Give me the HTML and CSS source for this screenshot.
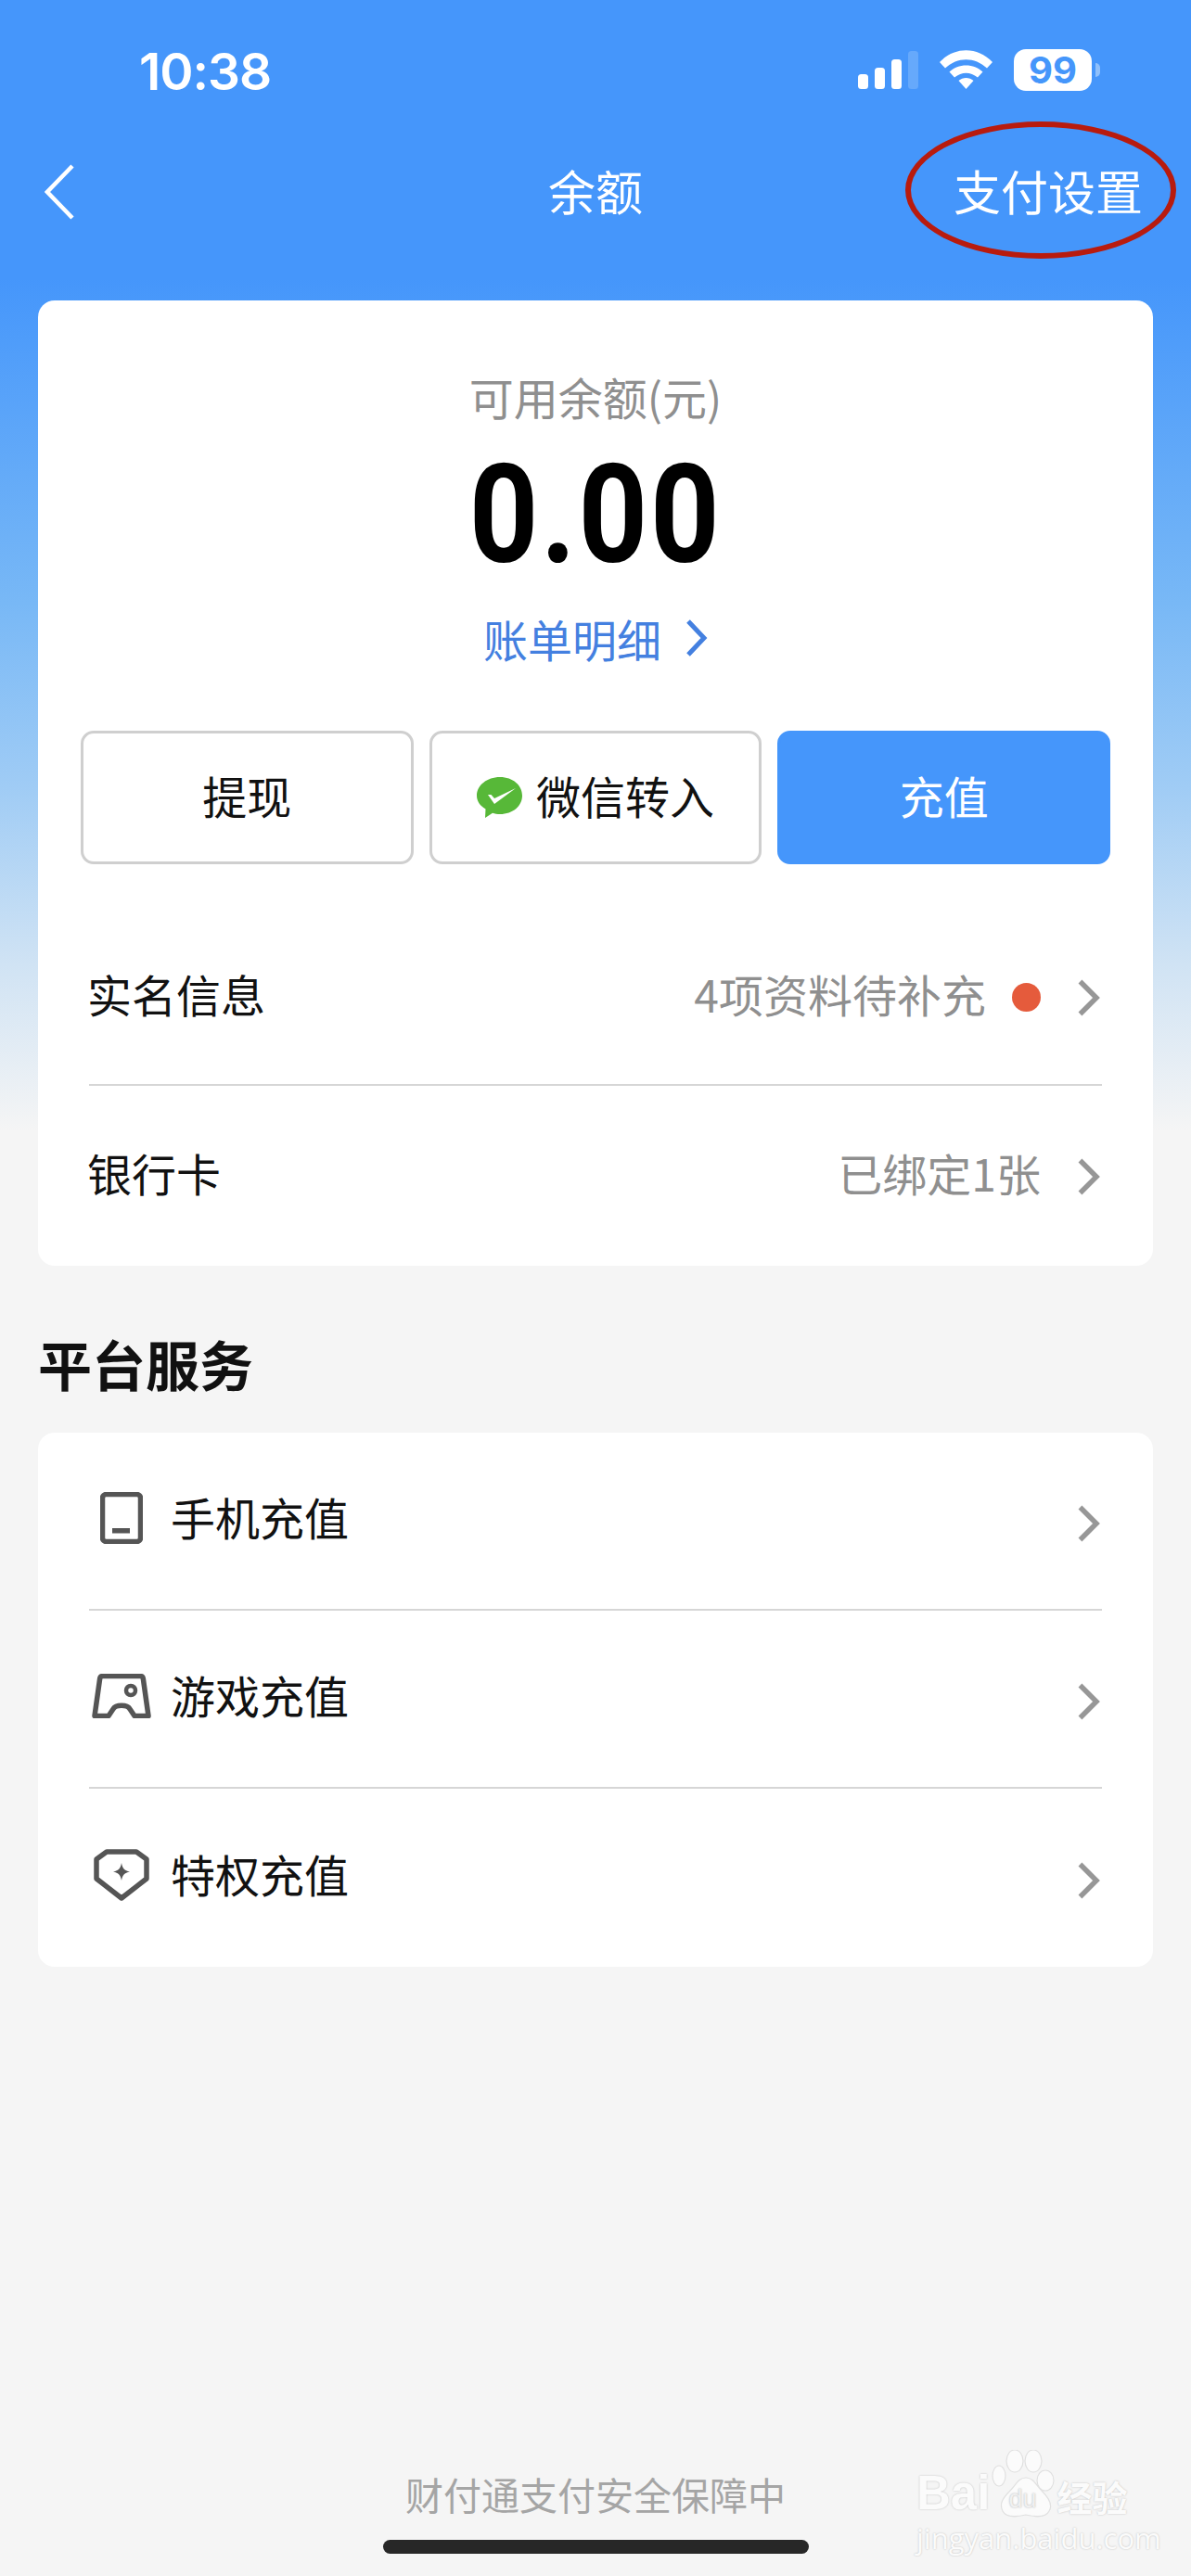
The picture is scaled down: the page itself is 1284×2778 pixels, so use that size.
FILE: index.html
```html
<!DOCTYPE html>
<html lang="zh-CN">
<head>
  <meta charset="UTF-8">
  <title>余额</title>
  <link rel="stylesheet" href="styles.css">
</head>
<body>
  <div class="page">
    <div class="status-bar">
      <span class="time">10:38</span>
      <div class="status-icons">
        <svg class="signal" width="65" height="41" viewBox="0 0 65 41">
          <rect x="0" y="25" width="11" height="16" rx="3.5" fill="#fff"/>
          <rect x="18" y="18" width="11" height="23" rx="3.5" fill="#fff"/>
          <rect x="36" y="9" width="11" height="32" rx="3.5" fill="#fff"/>
          <rect x="54" y="0" width="11" height="41" rx="3.5" fill="#fff" fill-opacity=".18"/>
        </svg>
        <svg class="wifi" width="57" height="42" viewBox="0 0 57 42">
          <path d="M0 13 C16 -4 41 -4 57 13 L51 19.500 C38 7 19 7 6 19.500 Z" fill="#fff"/>
          <path d="M10.500 23.500 C20 14 37 14 46.500 23.500 L41 29.500 C33 23 24 23 16 29.500 Z" fill="#fff"/>
          <path d="M20.500 33 C25 29 32 29 36.500 33 L28.500 42 Z" fill="#fff"/>
        </svg>
        <div class="battery"><span class="battery-num">99</span></div>
        <span class="battery-nub"></span>
      </div>
    </div>

    <div class="nav">
      <svg class="nav-back" width="32" height="60" viewBox="0 0 32 60">
        <path d="M30 2 L3 30 L30 58" fill="none" stroke="#fff" stroke-width="4.500"/>
      </svg>
      <span class="nav-title">余额</span>
      <span class="nav-link">支付设置</span>
      <span class="mark"></span>
    </div>

    <div class="card balance-card">
      <div class="balance-label">可用余额(元)</div>
      <div class="balance-num">0.00</div>
      <div class="bill-link">账单明细
        <svg width="24" height="42" viewBox="0 0 24 42"><path d="M3 3 L20 21 L3 39" fill="none" stroke="#4480e0" stroke-width="5"/></svg>
      </div>
      <div class="actions">
        <div class="btn">提现</div>
        <div class="btn">
          <svg class="wechat" width="49" height="45" viewBox="0 0 49 45">
            <path d="M25 0 C39 0 49 9 49 20 C49 31 39 40 25 40 C22 40 19.500 39.600 17 38.800 L9 44 L9.500 34.500 C3.500 31 0 26 0 20 C0 9 11 0 25 0 Z" fill="#57b838"/>
            <path d="M12 19 L15.500 19 L19 23 L42 12 L19 29 Z" fill="#fff"/>
          </svg>
          微信转入
        </div>
        <div class="btn btn-primary">充值</div>
      </div>
      <div class="row">
        <span class="row-name">实名信息</span>
        <span class="row-value">4项资料待补充</span>
        <span class="dot"></span>
        <svg class="chevron" width="24" height="40" viewBox="0 0 24 40"><path d="M2.500 2.500 L20 20 L2.500 37.500" fill="none" stroke="#979797" stroke-width="5.500"/></svg>
      </div>
      <div class="row row-last">
        <span class="row-name">银行卡</span>
        <span class="row-value">已绑定1张</span>
        <svg class="chevron" width="24" height="40" viewBox="0 0 24 40"><path d="M2.500 2.500 L20 20 L2.500 37.500" fill="none" stroke="#979797" stroke-width="5.500"/></svg>
      </div>
    </div>

    <h2 class="section-title">平台服务</h2>

    <div class="card service-card">
      <div class="row">
        <span class="row-icon">
          <svg width="46" height="56" viewBox="0 0 46 56">
            <rect x="2.500" y="2.500" width="41" height="51" rx="4" fill="none" stroke="#555" stroke-width="5.500"/>
            <rect x="13" y="39" width="19" height="5.500" fill="#555"/>
          </svg>
        </span>
        <span class="row-name">手机充值</span>
        <svg class="chevron" width="24" height="40" viewBox="0 0 24 40"><path d="M2.500 2.500 L20 20 L2.500 37.500" fill="none" stroke="#979797" stroke-width="5.500"/></svg>
      </div>
      <div class="row">
        <span class="row-icon">
          <svg width="64" height="48" viewBox="0 0 64 48">
            <path d="M12 2.500 H52 C54 2.500 55 3.500 55.300 5 L61 45.500 H46 L41 38 C38 33 26 33 23 38 L18 45.500 H3 L8.700 5 C9 3.500 10 2.500 12 2.500 Z" fill="none" stroke="#555" stroke-width="5.500" stroke-linejoin="round"/>
            <circle cx="42" cy="18" r="5" fill="none" stroke="#555" stroke-width="4.500"/>
          </svg>
        </span>
        <span class="row-name">游戏充值</span>
        <svg class="chevron" width="24" height="40" viewBox="0 0 24 40"><path d="M2.500 2.500 L20 20 L2.500 37.500" fill="none" stroke="#979797" stroke-width="5.500"/></svg>
      </div>
      <div class="row row-last">
        <span class="row-icon">
          <svg width="60" height="56" viewBox="0 0 60 56">
            <path d="M14 3 H46 L57 11 V32 L30 53 L3 32 V11 Z" fill="none" stroke="#555" stroke-width="5.500" stroke-linejoin="round"/>
            <path d="M30 15 C31 21 33 23 39 24.500 C33 26 31 28 30 34 C29 28 27 26 21 24.500 C27 23 29 21 30 15 Z" fill="#555"/>
          </svg>
        </span>
        <span class="row-name">特权充值</span>
        <svg class="chevron" width="24" height="40" viewBox="0 0 24 40"><path d="M2.500 2.500 L20 20 L2.500 37.500" fill="none" stroke="#979797" stroke-width="5.500"/></svg>
      </div>
    </div>

    <div class="footer-text">财付通支付安全保障中</div>
    <div class="home-bar"></div>

    <div class="watermark">
      <div class="wm-top">
        <span class="wm-bai">Bai</span>
        <span class="wm-paw">
          <svg width="68" height="73" viewBox="0 0 68 73">
            <g fill="#fbfbfb" stroke="#e0e0e0" stroke-width="1.200">
              <ellipse cx="8" cy="28" rx="7" ry="11"/>
              <ellipse cx="25" cy="12" rx="9" ry="12"/>
              <ellipse cx="45" cy="12" rx="9" ry="12"/>
              <ellipse cx="58" cy="33" rx="9" ry="11"/>
              <path d="M37 30 C45 30 48 38 54 44 C62 52 66 60 62 66 C58 74 46 72 37 70 C28 72 16 74 12 66 C8 58 12 52 20 44 C26 38 29 30 37 30 Z"/>
            </g>
          </svg>
          <span class="wm-du">du</span>
        </span>
        <span class="wm-jy">经验</span>
      </div>
      <div class="wm-url">jingyan.baidu.com</div>
    </div>
  </div>
</body>
</html>
```

FILE: styles.css
```css
* { box-sizing:border-box; }
body { margin:0; font-family:"Noto Sans CJK SC","Noto Sans",sans-serif; color:#111; }
.page { position:relative; width:1284px; height:2778px; overflow:hidden; display:flex; flex-direction:column; background:linear-gradient(180deg,#4596fb 0,#4596fb 300px,#78b8f6 650px,#a0ccf5 850px,#d0e3f4 1040px,#f5f5f5 1220px,#f5f5f5 100%); }

.status-bar { height:110px; flex:none; display:flex; align-items:flex-start; justify-content:space-between; color:#fff; }
.time { margin:39px 0 0 150px; font-family:"Inter",sans-serif; font-size:55px; line-height:76px; font-weight:600; letter-spacing:-1px; }
.status-icons { display:flex; align-items:flex-start; padding:53px 98px 0 0; }
.signal { margin:2px 23px 0 0; }
.wifi { margin:1px 23px 0 0; }
.battery { width:84px; height:45px; background:#fff; border-radius:13px; display:flex; align-items:center; justify-content:center; }
.battery-num { font-family:"Inter",sans-serif; font-size:40px; font-weight:700; line-height:45px; color:#4596fb; }
.battery-nub { width:5px; height:15px; margin:15px 0 0 4px; background:#8fc0fb; border-radius:0 8px 8px 0; }

.nav { position:relative; height:194px; margin-bottom:20px; padding-bottom:4px; flex:none; display:flex; align-items:center; color:#fff; font-size:51px; }
.nav-back { margin:4px 0 0 48px; }
.nav-title { position:absolute; left:0; right:0; text-align:center; }
.nav-link { margin-left:auto; margin-right:52px; }
.mark { position:absolute; left:976px; top:21px; width:292px; height:148px; border:6px solid #b81b0e; border-radius:50%; }

.card { margin:0 41px; background:#fff; border-radius:18px; flex:none; }
.balance-card { height:1041px; padding:0 46px; }
.balance-label { margin-top:67px; text-align:center; font-size:48px; line-height:72px; color:#8f8f8f; }
.balance-num { margin-top:28px; text-align:center; font-family:"Roboto",sans-serif; font-size:148px; line-height:130px; font-weight:700; letter-spacing:3px; transform:scaleX(.88); color:#000; }
.bill-link { margin-top:31px; display:flex; align-items:center; justify-content:center; gap:26px; font-size:48px; line-height:72px; color:#4480e0; }
.actions { display:flex; gap:17px; margin-top:64px; margin-bottom:47px; }
.btn { flex:1; height:144px; padding-bottom:6px; display:flex; align-items:center; justify-content:center; gap:15px; border:3px solid #cfcfcf; border-radius:14px; font-size:48px; }
.btn-primary { background:#4596fb; border-color:#4596fb; color:#fff; }
.wechat { margin-top:6px; }

.row { height:192px; margin:0 9px; padding-bottom:6px; display:flex; align-items:center; border-bottom:2px solid #d6d6d6; font-size:48px; }
.row-last { border-bottom:none; }
.row-name { margin-right:auto; }
.balance-card .row-name { margin-left:-2px; }
.row-value { color:#8f8f8f; }
.dot { width:31px; height:31px; margin:8px 0 0 28px; background:#e55b3c; border-radius:50%; }
.chevron { margin:10px 2px 0 40px; flex:none; }
.row-icon { width:88px; padding-right:19px; display:flex; justify-content:center; flex:none; }

.section-title { margin:68px 0 38px 41px; font-size:58px; line-height:74px; font-weight:700; color:#111; }
.service-card { height:576px; padding:0 46px; }
.service-card .row { padding-bottom:10px; }
.service-card .row-icon { margin-top:4px; }
.service-card .chevron { margin-top:15px; }

.footer-text { margin-top:auto; margin-bottom:20px; text-align:center; font-size:41px; line-height:60px; color:#a5a5a5; }
.home-bar { width:459px; height:15px; margin:0 auto 24px; background:#272727; border-radius:8px; flex:none; }

.watermark { position:absolute; left:988px; top:2642px; width:230px; color:#fbfbfb; }
.wm-top { display:flex; align-items:flex-end; height:73px; }
.wm-bai { font-family:"Liberation Sans",sans-serif; font-size:51px; line-height:54px; font-weight:700; margin-bottom:-1px; text-shadow:0 0 2px #b9b9b9; }
.wm-paw { position:relative; width:68px; height:73px; margin-left:2px; flex:none; }
.wm-paw svg { display:block; }
.wm-du { position:absolute; left:18px; bottom:5px; font-family:"Liberation Sans",sans-serif; font-size:27px; line-height:30px; color:#f0f0f0; text-shadow:0 0 2px #aaa; }
.wm-jy { font-size:38px; line-height:46px; font-weight:700; margin-left:2px; white-space:nowrap; text-shadow:0 0 2px #b9b9b9; }
.wm-url { margin-top:3px; font-family:"Open Sans",sans-serif; font-size:31px; line-height:38px; white-space:nowrap; text-shadow:0 0 2px #b9b9b9; }
```
